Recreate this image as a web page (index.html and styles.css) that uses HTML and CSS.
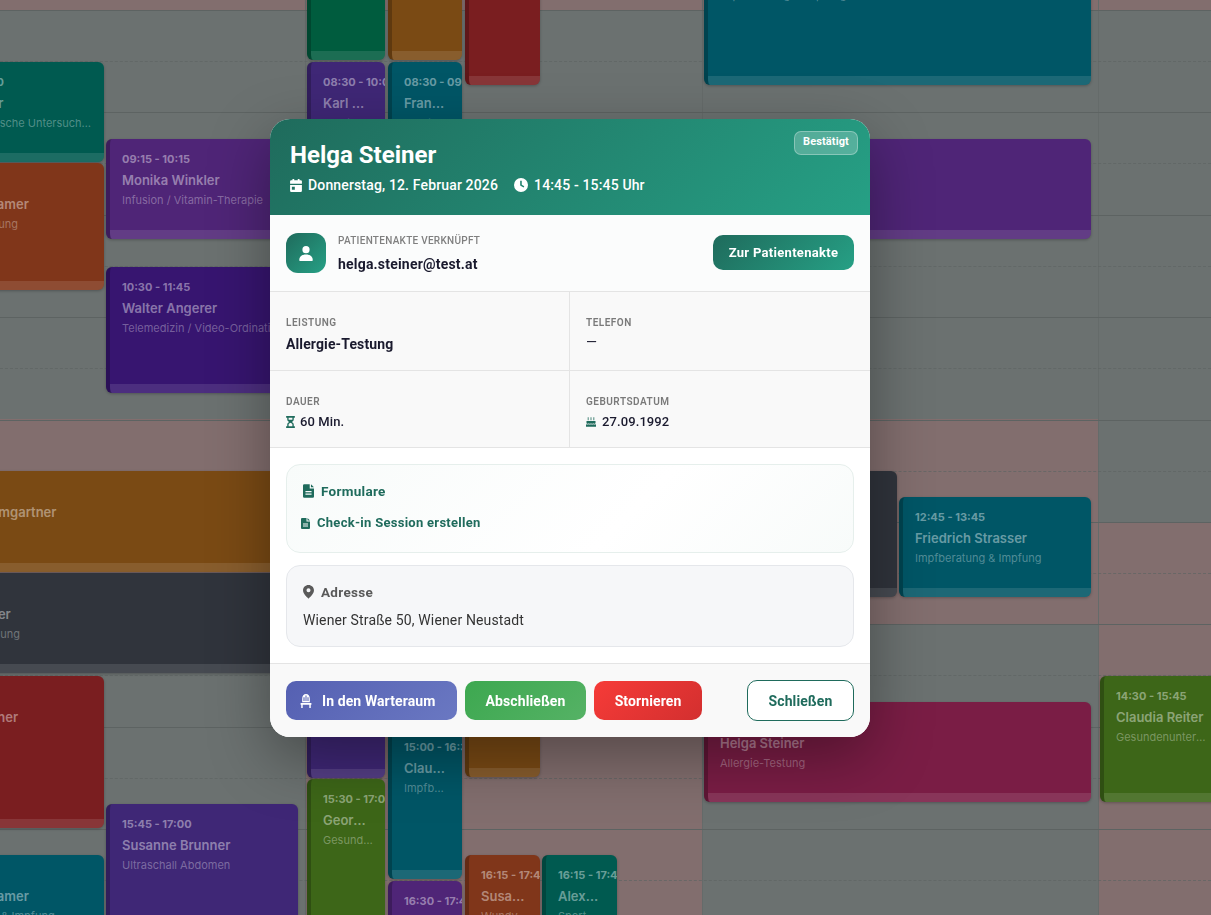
FILE: index.html
```html
<!DOCTYPE html>
<html lang="de">
<head>
<meta charset="utf-8">
<title>Termin – Helga Steiner</title>
<link rel="stylesheet" href="styles.css">
</head>
<body>
<div class="cal">
  <div class="lines">
    <div class="hour"></div><div class="hour"></div><div class="hour"></div><div class="hour"></div><div class="hour"></div><div class="hour"></div><div class="hour"></div><div class="hour"></div><div class="hour"></div>
  </div>
  <div class="cols">
    <section class="col">
      <i class="off off-top"></i><i class="off off-mid"></i>
      <article class="ev teal c-a"><b>08:30 - 09:30</b><strong>Josef Bauer</strong><span>Sportmedizinische Untersuchung</span></article>
      <article class="ev orange c-b"><b>09:30 - 11:15</b><strong>Theresa Kramer</strong><span>Wundversorgung</span></article>
      <article class="ev violet c-c"><b>09:15 - 10:15</b><strong>Monika Winkler</strong><span>Infusion / Vitamin-Therapie</span></article>
      <article class="ev indigo c-d"><b>10:30 - 11:45</b><strong>Walter Angerer</strong><span>Telemedizin / Video-Ordination</span></article>
      <article class="ev amber c-e"><b>11:30 - 12:30</b><strong>Sabine Baumgartner</strong><span>Labor</span></article>
      <article class="ev slate c-f"><b>12:30 - 13:30</b><strong>Stefan Huber</strong><span>Wundbehandlung</span></article>
      <article class="ev red c-g"><b>13:30 - 15:00</b><strong>Gerda Wagner</strong><span>Labor</span></article>
      <article class="ev plum c-h"><b>15:45 - 17:00</b><strong>Susanne Brunner</strong><span>Ultraschall Abdomen</span></article>
      <article class="ev cyan c-i"><b>16:15 - 17:15</b><strong>Theresa Kramer</strong><span>Impfberatung &amp; Impfung</span></article>
    </section>
    <section class="col">
      <i class="off off-top"></i><i class="off off-rest"></i>
      <article class="ev forest d-a"><b>07:00 - 08:15</b><strong>Stefan Maier</strong><span>Labor</span></article>
      <article class="ev amber d-b"><b>07:00 - 08:15</b><strong>Eva Gruber</strong><span>Labor</span></article>
      <article class="ev red d-c"><b>07:15 - 08:45</b><strong>Anna Berger</strong><span>Labor</span></article>
      <article class="ev plum d-d"><b>08:30 - 10:00</b><strong>Karl Hofer</strong><span>Beratung</span></article>
      <article class="ev cyan d-e"><b>08:30 - 09:30</b><strong>Franz Koller</strong><span>Beratung</span></article>
      <article class="ev plum d-f"><b>14:00 - 15:30</b><strong>Ida Moser</strong><span>Beratung</span></article>
      <article class="ev cyan d-g"><b>15:00 - 16:30</b><strong>Claudia Pichler</strong><span>Impfberatung</span></article>
      <article class="ev amber d-h"><b>14:00 - 15:30</b><strong>Otto Wolf</strong><span>Beratung</span></article>
      <article class="ev lime d-i"><b>15:30 - 17:00</b><strong>Georg Fuchs</strong><span>Gesundenuntersuchung</span></article>
      <article class="ev violet d-j"><b>16:30 - 17:45</b><strong>Lena Aigner</strong><span>Infusion</span></article>
      <article class="ev orange d-k"><b>16:15 - 17:45</b><strong>Susanne Egger</strong><span>Wundversorgung</span></article>
      <article class="ev teal d-l"><b>16:15 - 17:45</b><strong>Alexander Graf</strong><span>Sportmedizin</span></article>
    </section>
    <section class="col">
      <i class="off off-top"></i><i class="off off-mid"></i>
      <article class="ev cyan e-a"><b>07:00 - 08:45</b><strong>Robert Haas</strong><span>Impfberatung &amp; Impfung</span></article>
      <article class="ev violet e-b"><b>09:15 - 10:15</b><strong>Julia Lang</strong><span>Infusion</span></article>
      <article class="ev slate e-c"><b>11:30 - 12:45</b><strong>Paul Winter</strong><span>Beratung</span></article>
      <article class="ev cyan e-d"><b>12:45 - 13:45</b><strong>Friedrich Strasser</strong><span>Impfberatung &amp; Impfung</span></article>
      <article class="ev pink e-e"><b>14:45 - 15:45</b><strong>Helga Steiner</strong><span>Allergie-Testung</span></article>
    </section>
    <section class="col">
      <i class="off off-top"></i><i class="off off-late"></i>
      <article class="ev lime f-a"><b>14:30 - 15:45</b><strong>Claudia Reiter</strong><span>Gesundenuntersuchung</span></article>
    </section>
  </div>
</div>

<div class="overlay">
  <div class="modal" role="dialog" aria-label="Termin">
    <header class="head">
      <h1>Helga Steiner</h1>
      <div class="meta">
        <span class="meta-item">
          <svg class="ic-cal" viewBox="2 1 20 22" fill="#fff"><path fill-rule="evenodd" d="M6 1h3v2h6V1h3v2h2a2 2 0 0 1 2 2v4H2V5a2 2 0 0 1 2-2h2zM2 11h20v10a2 2 0 0 1-2 2H4a2 2 0 0 1-2-2zm3 3v5h5v-5z"/></svg>
          Donnerstag, 12. Februar 2026
        </span>
        <span class="meta-item">
          <svg class="ic-clock" viewBox="1 1 22 22"><path fill="#fff" fill-rule="evenodd" d="M12 1a11 11 0 1 1 0 22a11 11 0 0 1 0-22zM10.700 5.500v7.200l5.300 3.200 1.200-2-4-2.400V5.500z"/></svg>
          14:45 - 15:45 Uhr
        </span>
      </div>
      <span class="badge">Bestätigt</span>
    </header>

    <div class="patient">
      <div class="avatar">
        <svg viewBox="0 0 24 24" fill="#fff"><circle cx="12" cy="7.500" r="4.800"/><path d="M3 21.500c0-5 3.500-7.500 9-7.500s9 2.500 9 7.500c0 .6-.4 1-1 1H4c-.6 0-1-.4-1-1z"/></svg>
      </div>
      <div class="patient-text">
        <div class="patient-label">Patientenakte verknüpft</div>
        <div class="patient-mail">helga.steiner@test.at</div>
      </div>
      <button class="btn-file" type="button">Zur Patientenakte</button>
    </div>

    <div class="facts">
      <div class="fact tall">
        <div class="fact-label">Leistung</div>
        <div class="fact-strong">Allergie-Testung</div>
      </div>
      <div class="fact tall">
        <div class="fact-label">Telefon</div>
        <div class="fact-dash">—</div>
      </div>
      <div class="fact">
        <div class="fact-label">Dauer</div>
        <div class="fact-value">
          <svg class="ic-glass" viewBox="4 1 16 22" fill="#1f6b5c"><path fill-rule="evenodd" d="M4 1h16v3h-2v3c0 2.500-1.800 4-3.500 5 1.700 1 3.500 2.500 3.500 5v3h2v3H4v-3h2v-3c0-2.500 1.800-4 3.500-5C7.800 11 6 9.500 6 7V4H4zm4.500 3v3c0 .4.100.8.300 1h6.400c.2-.2.300-.6.300-1V4zM12 13.500c-2 1.100-3.500 2-3.500 3.500v3h7v-3c0-1.500-1.500-2.400-3.500-3.500z"/></svg>
          60 Min.
        </div>
      </div>
      <div class="fact">
        <div class="fact-label">Geburtsdatum</div>
        <div class="fact-value">
          <svg class="ic-cake" viewBox="2 3 20 19" fill="#1f6b5c"><path d="M5.500 3h1.600v6H5.500zM11.200 3h1.600v6h-1.600zM16.900 3h1.600v6h-1.600zM3 10.500h18V15c-1.500 1.400-3 1.400-4.500 0-1.500 1.400-3 1.400-4.500 0-1.500 1.400-3 1.400-4.500 0-1.500 1.400-3 1.400-4.500 0zM2 17c2 1 3.600.8 5-.2 1.600 1 3.400 1 5 0 1.600 1 3.400 1 5 0 1.400 1 3 1.200 5 .2v5H2z"/></svg>
          27.09.1992
        </div>
      </div>
    </div>

    <div class="body">
      <section class="box box-forms">
        <h2 class="box-title green">
          <svg class="ic-doc" viewBox="3 1 18 22"><path fill="#1f6b5c" fill-rule="evenodd" d="M5 1h9v7h7v13a2 2 0 0 1-2 2H5a2 2 0 0 1-2-2V3a2 2 0 0 1 2-2zm11 0 5 5h-5zM7 12v2h10v-2zm0 4v2h10v-2z"/></svg>
          Formulare
        </h2>
        <a class="form-link">
          <svg class="ic-doc-sm" viewBox="3 1 18 22"><path fill="#1f6b5c" fill-rule="evenodd" d="M5 1h9v7h7v13a2 2 0 0 1-2 2H5a2 2 0 0 1-2-2V3a2 2 0 0 1 2-2zm11 0 5 5h-5zM7 12v2h10v-2zm0 4v2h10v-2z"/></svg>
          Check-in Session erstellen
        </a>
      </section>
      <section class="box box-address">
        <h2 class="box-title gray">
          <svg class="ic-doc" viewBox="3 1 18 23"><path fill="#5a5a5a" fill-rule="evenodd" d="M12 1c5 0 9 3.800 9 8.800C21 15 15.500 20.500 12 23.500 8.500 20.500 3 15 3 9.800 3 4.800 7 1 12 1zm0 5.500a3.300 3.300 0 1 0 0 6.600 3.300 3.300 0 0 0 0-6.600z"/></svg>
          Adresse
        </h2>
        <p class="address">Wiener Straße 50, Wiener Neustadt</p>
      </section>
    </div>

    <footer class="foot">
      <button class="btn btn-wait" type="button">
        <svg class="ic-chair" viewBox="3 1 18 22" fill="#fff"><path fill-rule="evenodd" d="M6 8.500C6 4 8.500 1 12 1s6 3 6 7.500V14H6zM8 12h1.700V6H8zm3.200 0h1.600V3.500h-1.600zm3.100 0H16V6h-1.700zM3.500 15h17v3h-1V23h-2.300v-5H6.800v5H4.500v-5h-1z"/></svg>
        In den Warteraum
      </button>
      <button class="btn btn-done" type="button">Abschließen</button>
      <button class="btn btn-cancel" type="button">Stornieren</button>
      <button class="btn btn-close" type="button">Schließen</button>
    </footer>
  </div>
</div>
</body>
</html>
```
FILE: styles.css
```css
* { box-sizing: border-box; }
html, body { margin: 0; height: 100%; overflow: hidden; }
body { font-family: Roboto, "Liberation Sans", sans-serif; background: #6b7170; }

/* dimmed calendar behind the dialog */
.cal { position: relative; width: 1211px; height: 915px; overflow: hidden; background: #6b7170; font-family: Inter, "Liberation Sans", sans-serif; }
.lines { position: absolute; z-index: 1; left: 0; right: 0; top: 10px; }
.hour { height: 102.4px; border-top: 1px solid #5d6362; position: relative; }
.hour::after { content: ""; position: absolute; left: 0; right: 0; top: 50px; border-top: 1px dashed #5f6564; opacity: .7; }
.cols { display: flex; height: 100%; margin-left: -90px; }
.col { position: relative; width: 396.400px; flex: none; border-right: 1px solid #656b6a; }
.off { position: absolute; left: 0; right: 0; background: #826e6e; }
.off-top { top: 0; height: 10px; }
.off-mid { top: 419px; height: 205px; }
.off-rest { top: 419px; height: 496px; }
.off-late { top: 522px; height: 393px; }

.ev { position: absolute; z-index: 2; display: flex; flex-direction: column; overflow: hidden; padding: 13px 12px 0 12px; border-left: 4px solid rgba(0,0,0,.22); border-radius: 6px; box-shadow: 0 1px 3px rgba(0,0,0,.25); color: rgba(255,255,255,.42); }
.ev::after { content: ""; position: absolute; left: 0; right: 0; bottom: 0; height: 9px; background: rgba(255,255,255,.11); }
.ev b { font-size: 11px; line-height: 14px; font-weight: 700; white-space: nowrap; }
.ev strong { margin-top: 5px; font-size: 13px; line-height: 18px; font-weight: 600; white-space: nowrap; overflow: hidden; text-overflow: ellipsis; }
.ev span { margin-top: 3px; font-size: 11px; line-height: 16px; color: rgba(255,255,255,.33); white-space: nowrap; overflow: hidden; text-overflow: ellipsis; }

.teal { background: #005a50; }
.orange { background: #80361a; }
.violet { background: #4f2577; }
.indigo { background: #371570; }
.amber { background: #7a4a14; }
.slate { background: #30343c; }
.red { background: #7a1e20; }
.plum { background: #3f2776; }
.cyan { background: #005666; }
.forest { background: #005c3e; }
.lime { background: #3d6618; }
.pink { background: #7a1d45; }

.c-a { left: 2px; width: 192px; top: 62px; height: 100px; }
.c-b { left: 2px; width: 192px; top: 163px; height: 127px; }
.c-c { left: 196px; width: 192px; top: 139px; height: 100px; }
.c-d { left: 196px; width: 192px; top: 267px; height: 126px; }
.c-e { left: 2px; width: 386px; top: 471px; height: 101px; }
.c-f { left: 2px; width: 386px; top: 573px; height: 100px; }
.c-g { left: 2px; width: 192px; top: 676px; height: 152px; }
.c-h { left: 196px; width: 192px; top: 804px; height: 126px; }
.c-i { left: 2px; width: 192px; top: 855px; height: 100px; }

.d-a { left: .6px; width: 78px; top: -100px; height: 160px; }
.d-b { left: 81.600px; width: 74px; top: -100px; height: 160px; }
.d-c { left: 158.600px; width: 75px; top: -80px; height: 165px; }
.d-d { left: .6px; width: 78px; top: 62px; height: 154px; }
.d-e { left: 81.600px; width: 74px; top: 62px; height: 100px; }
.d-f { left: .6px; width: 78px; top: 625px; height: 153px; }
.d-g { left: 81.600px; width: 74px; top: 727px; height: 152px; }
.d-h { left: 158.600px; width: 75px; top: 625px; height: 152px; }
.d-i { left: .6px; width: 78px; top: 779px; height: 154px; }
.d-j { left: 81.600px; width: 74px; top: 881px; height: 126px; }
.d-k { left: 158.600px; width: 75px; top: 855px; height: 150px; }
.d-l { left: 235.600px; width: 75px; top: 855px; height: 150px; }

.e-a { left: 1.200px; width: 387px; top: -66px; height: 151px; }
.e-b { left: 1.200px; width: 387px; top: 139px; height: 100px; }
.e-c { left: 1.200px; width: 193px; top: 471px; height: 126px; }
.e-d { left: 196.200px; width: 192px; top: 497px; height: 100px; }
.e-e { left: 1.200px; width: 387px; top: 702px; height: 100px; }

.f-a { left: .8px; width: 119px; top: 676px; height: 126px; }

/* dialog */
.overlay { position: fixed; inset: 0; z-index: 10; display: flex; align-items: flex-start; padding: 119px 0 0 270px; backdrop-filter: blur(.4px); }
.modal { width: 600px; height: 618px; display: flex; flex-direction: column; background: #fff; border-radius: 20px; overflow: hidden; box-shadow: 0 20px 60px rgba(0,0,0,.35); color: #1a1a2e; }

.head { position: relative; height: 96px; flex: none; padding: 20px 20px 0; background: linear-gradient(135deg, #1f6b5c 0%, #26a085 100%); color: #fff; }
.head h1 { margin: 0; font-size: 24px; line-height: 32px; font-weight: 700; }
.meta { display: flex; gap: 16px; margin-top: 4px; font-size: 14px; line-height: 20px; font-weight: 500; letter-spacing: .15px; }
.meta-item { display: flex; align-items: center; gap: 6px; }
.ic-cal { width: 12px; height: 13px; flex: none; }
.ic-clock { width: 14px; height: 14px; flex: none; }
.badge { position: absolute; top: 12px; right: 12px; width: 64px; height: 24px; display: flex; justify-content: center; padding-top: 3px; border: 1px solid rgba(255,255,255,.3); border-radius: 7px; background: rgba(255,255,255,.22); font-size: 11px; line-height: 14px; font-weight: 700; letter-spacing: .1px; }

.patient { height: 77px; flex: none; display: flex; align-items: center; padding: 0 16px; background: #fbfcfc; border-bottom: 1px solid #e4e4e4; }
.avatar { width: 40px; height: 40px; flex: none; display: flex; align-items: center; justify-content: center; border-radius: 12px; background: linear-gradient(135deg, #1f6b5c, #26a085); }
.avatar svg { width: 18px; height: 18px; }
.patient-text { flex: 1; margin-left: 12px; padding-top: 2px; }
.patient-label { font-size: 10px; line-height: 14px; font-weight: 500; letter-spacing: .28px; text-transform: uppercase; color: #7f7f7f; }
.patient-mail { margin-top: 6px; font-size: 14px; line-height: 20px; font-weight: 700; letter-spacing: .2px; }
.btn-file { width: 141px; height: 35px; margin-top: -1px; border: 0; border-radius: 10px; background: linear-gradient(135deg, #1f6b5c, #26a085); color: #fff; font: 700 13px/1 Roboto, sans-serif; letter-spacing: .3px; }

.facts { flex: none; display: grid; grid-template-columns: 300px 300px; background: #f9f9f9; border-bottom: 1px solid #e4e4e4; }
.fact { height: 76px; padding: 24px 16px 0; }
.fact.tall { height: 79px; border-bottom: 1px solid #e4e4e4; }
.fact:nth-child(odd) { border-right: 1px solid #e4e4e4; }
.fact-label { font-size: 10px; line-height: 14px; font-weight: 600; letter-spacing: .5px; text-transform: uppercase; color: #7a7a7a; }
.fact-strong { margin-top: 4px; font-size: 14px; line-height: 20px; font-weight: 700; letter-spacing: .12px; }
.fact-dash { margin-top: 2px; font-size: 14px; line-height: 20px; font-weight: 400; }
.fact-value { display: flex; align-items: center; gap: 5px; margin-top: 4px; font-size: 13px; line-height: 18px; font-weight: 500; letter-spacing: .1px; }
.ic-glass { width: 9px; height: 12px; flex: none; }
.ic-cake { width: 10px; height: 12px; flex: none; margin-right: 1px; }

.body { flex: 1; display: flex; flex-direction: column; gap: 12px; padding: 16px 16px 0; background: #fff; }
.box { border-radius: 14px; padding: 0 16px; }
.box-forms { height: 89px; border: 1px solid #e6efec; background: linear-gradient(135deg, #f8fbfa 0%, #fff 60%, #f8fbfa 100%); }
.box-address { height: 82px; border: 1px solid #e5e7eb; background: #f6f7f9; }
.box-title { display: flex; align-items: center; gap: 7px; margin: 17px 0 0; font-size: 13.500px; line-height: 18px; font-weight: 700; letter-spacing: .3px; }
.green { color: #1f6b5c; }
.gray { color: #595959; }
.ic-doc { width: 11px; height: 14px; flex: none; }
.form-link { display: flex; align-items: center; gap: 7px; margin: 14px 0 0 -2px; font-size: 13px; line-height: 18px; font-weight: 700; letter-spacing: .28px; color: #1f6b5c; }
.ic-doc-sm { width: 9px; height: 11px; flex: none; }
.address { margin: 10px 0 0; font-size: 14px; line-height: 18px; letter-spacing: .14px; color: #333; }

.foot { height: 74px; flex: none; display: flex; align-items: center; gap: 8px; padding: 0 16px; background: #f9f9f9; border-top: 1px solid #e4e4e4; }
.btn { height: 39px; display: flex; align-items: center; justify-content: center; gap: 10px; border: 0; border-radius: 10px; color: #fff; font: 700 14px/1 Roboto, sans-serif; letter-spacing: .1px; }
.btn-wait { width: 171px; justify-content: flex-start; padding: 0 0 0 14px; background: linear-gradient(135deg, #5560b2, #6a78c2); }
.btn-done { width: 121px; background: linear-gradient(135deg, #3da850, #55b265); }
.btn-cancel { width: 108px; background: linear-gradient(135deg, #f63b38, #d32f2f); }
.btn-close { width: 107px; height: 41px; margin-left: auto; background: #fff; border: 1px solid #1f6b5c; color: #1f6b5c; }
.ic-chair { width: 12px; height: 14px; flex: none; }
```
